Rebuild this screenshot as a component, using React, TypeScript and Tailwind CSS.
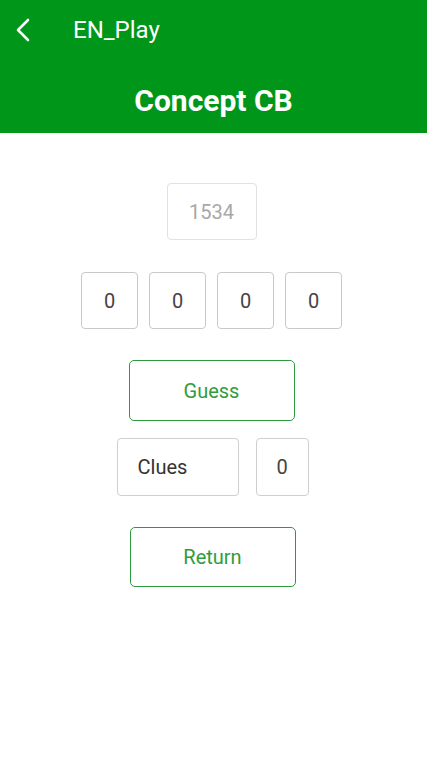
const digits = ['0', '0', '0', '0'];

export default function App() {
  return (
    <div className="min-h-[766px] bg-white" style={{ fontFamily: 'Roboto, "Liberation Sans", sans-serif' }}>
      {/* Header */}
      <div className="h-[133px] bg-[#00961a] text-white">
        <div className="flex h-[60px] items-center">
          <svg width="16" height="24" viewBox="0 0 16 24" className="ml-[15px]" fill="none" stroke="currentColor" strokeWidth="2.6" strokeLinecap="round" strokeLinejoin="round">
            <polyline points="13,2 3,12 13,22" />
          </svg>
          <span className="ml-[42px] text-[24px] leading-none">EN_Play</span>
        </div>
        <div className="flex h-[73px] items-center justify-center pt-[8px]">
          <span className="text-[30px] font-bold leading-none">Concept CB</span>
        </div>
      </div>

      {/* Game */}
      <div className="flex flex-col items-center pr-[4px] pt-[50px]">
        <div className="flex h-[57px] w-[90px] items-center justify-center rounded-[4px] border-[1.5px] border-[#e2e2e2] text-[20px] text-[#a8a8a8]">
          1534
        </div>

        <div className="mt-[32px] flex gap-[11px]">
          {digits.map((d, i) => (
            <div key={i} className="flex h-[57px] w-[57px] items-center justify-center rounded-[4px] border-[1.5px] border-[#c9c9c9] text-[20px] text-[#444]">
              {d}
            </div>
          ))}
        </div>

        <button className="mt-[31px] flex h-[61px] w-[166px] items-center justify-center rounded-[5px] border-[1.5px] border-[#2e9a40] text-[20px] text-[#2f9c40]">
          Guess
        </button>

        <div className="ml-[2px] mt-[17px] flex gap-[17px]">
          <div className="flex h-[58px] w-[122px] items-center rounded-[4px] border-[1.5px] border-[#cfcfcf] pl-[20px] text-[20px] text-[#333]">
            Clues
          </div>
          <div className="flex h-[58px] w-[53px] items-center justify-center rounded-[4px] border-[1.5px] border-[#cfcfcf] text-[20px] text-[#444]">
            0
          </div>
        </div>

        <button className="ml-[2px] mt-[31px] flex h-[60px] w-[166px] items-center justify-center rounded-[5px] border-[1.5px] border-[#2e9a40] text-[20px] text-[#2f9c40]">
          Return
        </button>
      </div>
    </div>
  );
}
